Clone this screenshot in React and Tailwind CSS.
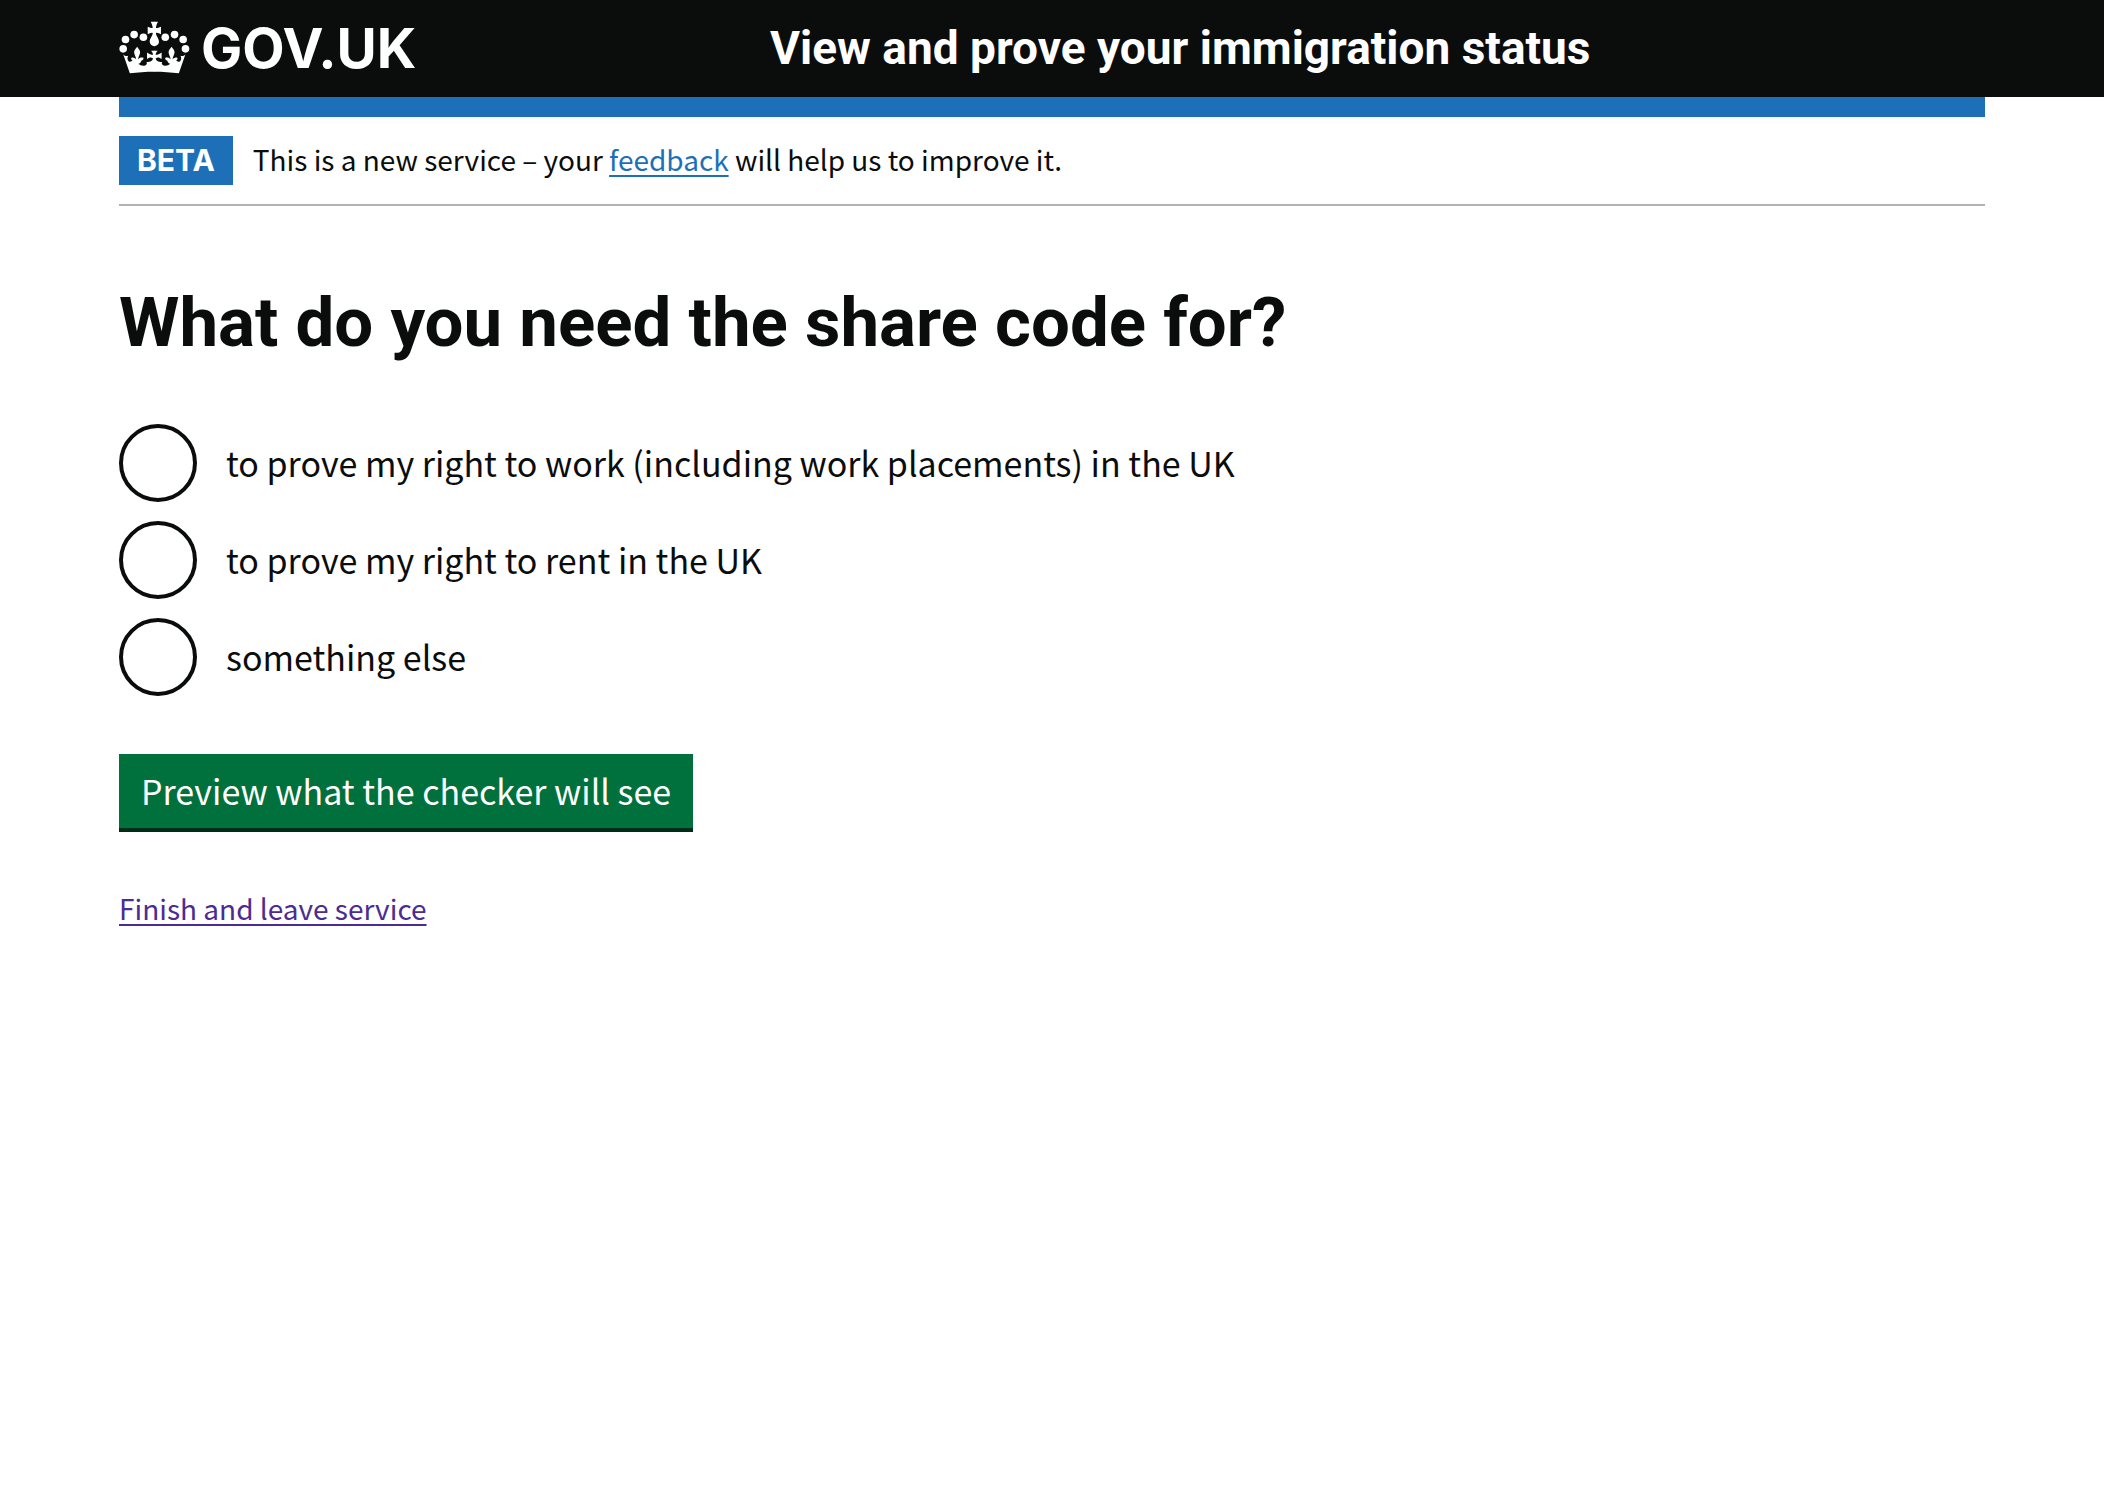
import { useState } from "react";

const purposes = [
  { id: "work", label: "to prove my right to work (including work placements) in the UK" },
  { id: "rent", label: "to prove my right to rent in the UK" },
  { id: "other", label: "something else" },
];

function CrownHalf() {
  return (
    <>
      <circle cx="37" cy="113" r="11.5" />
      <circle cx="44" cy="85" r="11.5" />
      <circle cx="70" cy="70" r="11.5" />
      <circle cx="98" cy="78" r="11.5" />
      {/* orb and upper cross */}
      <path d="M132 31H120C123 37 126 42 126 50C121 50 116 48 111 46V69C116 66 121 64 126 65C127 73 117 81 117 91C117 99 123 105 132 105Z" />
      {/* rim, side spike, fleur-de-lis and lower cross */}
      <path d="M132 182C105 182 80 184 57 187L37 129C42 135 47 136 52 134C49 140 49 147 54 151C58 154 63 151 65 147C61 146 60 143 62 140C67 138 72 140 76 145C76 136 70 130 70 123C70 116 76 112 79 107C82 112 88 116 88 123C88 130 82 136 82 145C86 139 92 138 98 140C99 144 97 148 92 148C91 154 87 157 83 158C88 163 96 165 103 163C109 161 110 156 107 153C114 152 125 152 127 142C121 137 115 139 109 144V124C115 128 121 131 127 131C127 127 125 123 121 119H132Z" />
    </>
  );
}

function Crown() {
  return (
    <svg viewBox="25 29 213 160" className="h-[53px] w-[71px] shrink-0 fill-white" aria-hidden="true">
      <CrownHalf />
      <g transform="translate(262 0) scale(-1 1)">
        <CrownHalf />
      </g>
    </svg>
  );
}

export default function App() {
  const [purpose, setPurpose] = useState("");

  return (
    <div className="min-h-screen bg-white font-['Noto_Sans_CJK_SC',sans-serif] text-[#0b0c0c]">
      <header className="bg-[#0b0c0c] px-[119px] text-white">
        <div className="grid h-[97px] grid-cols-3 items-center pb-0.5">
          <a href="#home" aria-label="GOV.UK" className="flex items-center gap-[11px] font-['Inter',sans-serif] text-[55px] leading-[60px] font-bold">
            <Crown />
            <span>GOV.UK</span>
          </a>
          <a href="#service" className="col-span-2 pl-[29px] font-['Roboto',sans-serif] text-[46px] leading-[60px] font-bold">
            View and prove your immigration status
          </a>
        </div>
      </header>

      <div className="px-[119px]">
        <div className="h-5 bg-[#1d70b8]" />
        <div className="flex items-center gap-5 border-b-2 border-[#b1b4b6] py-[19px] text-[28px] leading-[49px]">
          <strong className="bg-[#1d70b8] px-[18px] font-['Inter',sans-serif] text-[30px] font-bold text-white">BETA</strong>
          <p className="-mt-0.5">
            This is a new service – your{" "}
            <a href="#feedback" className="text-[#1d70b8] underline decoration-2 underline-offset-4">feedback</a>{" "}
            will help us to improve it.
          </p>
        </div>

        <main className="pt-[78px]">
          <form onSubmit={(e) => e.preventDefault()}>
            <fieldset>
              <legend className="font-['Roboto',sans-serif] text-[69px] leading-[78px] font-bold">
                <h1>What do you need the share code for?</h1>
              </legend>
              <div className="mt-[62px] flex flex-col gap-[19px]">
                {purposes.map(({ id, label }) => (
                  <div key={id} className="flex items-center gap-[29px]">
                    <input
                      type="radio"
                      id={id}
                      name="purpose"
                      value={id}
                      checked={purpose === id}
                      onChange={() => setPurpose(id)}
                      className="size-[78px] shrink-0 appearance-none rounded-full border-4 border-[#0b0c0c] bg-white checked:bg-[#0b0c0c] checked:bg-clip-content checked:p-3"
                    />
                    <label htmlFor={id} className="pb-0.5 text-[34px] leading-[49px]">{label}</label>
                  </div>
                ))}
              </div>
            </fieldset>
            <button type="submit" className="mt-[58px] bg-[#00703c] px-[22px] pt-3 pb-[13px] text-[34px] leading-[49px] text-white shadow-[0_4px_0_#002d18]">
              Preview what the checker will see
            </button>
          </form>
          <p className="mt-14 text-[28px] leading-[49px]">
            <a href="#finish" className="text-[#4c2c92] underline decoration-2 underline-offset-4">Finish and leave service</a>
          </p>
        </main>
      </div>
    </div>
  );
}
